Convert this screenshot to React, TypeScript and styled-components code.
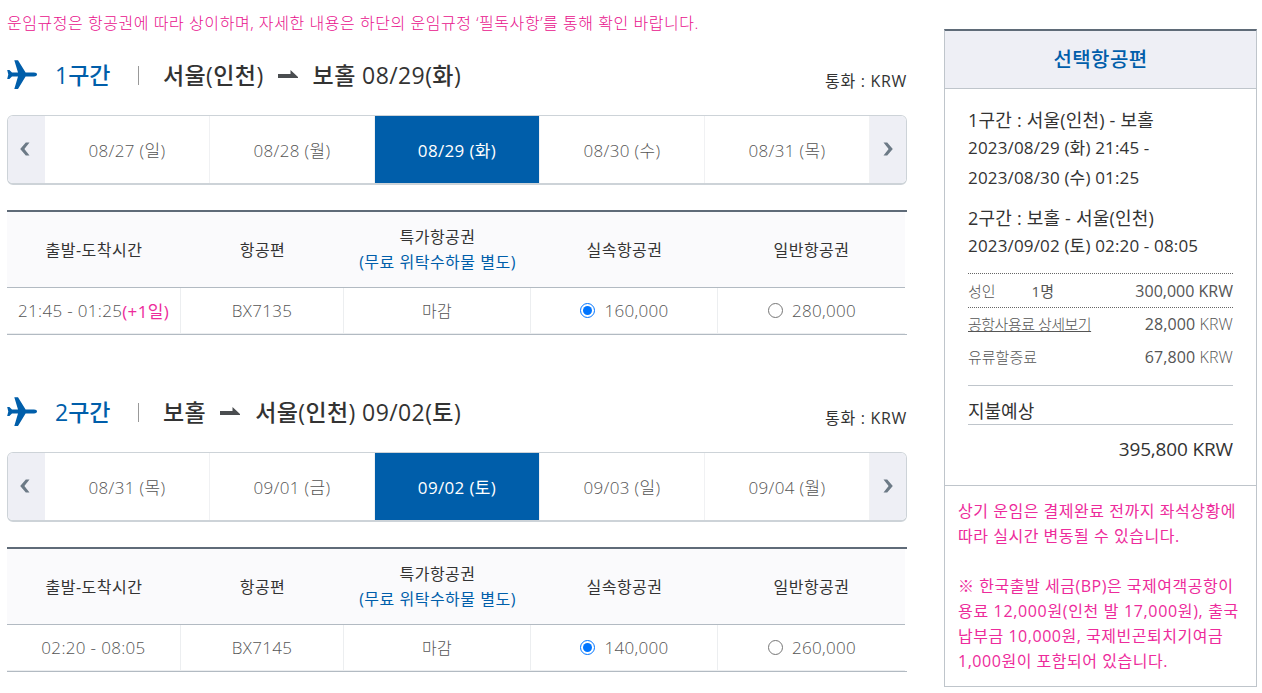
import React from 'react'
import styled, { createGlobalStyle } from 'styled-components'

const legs = [
  {
    no: '1구간',
    from: '서울(인천)',
    to: '보홀 08/29(화)',
    days: ['08/27 (일)', '08/28 (월)', '08/29 (화)', '08/30 (수)', '08/31 (목)'],
    time: '21:45 - 01:25',
    plus: '(+1일)',
    flight: 'BX7135',
    fares: ['160,000', '280,000'],
  },
  {
    no: '2구간',
    from: '보홀',
    to: '서울(인천) 09/02(토)',
    days: ['08/31 (목)', '09/01 (금)', '09/02 (토)', '09/03 (일)', '09/04 (월)'],
    time: '02:20 - 08:05',
    plus: '',
    flight: 'BX7145',
    fares: ['140,000', '260,000'],
  },
]

const notes = [
  '상기 운임은 결제완료 전까지 좌석상황에',
  '따라 실시간 변동될 수 있습니다.',
  '',
  '※ 한국출발 세금(BP)은 국제여객공항이',
  '용료 12,000원(인천 발 17,000원), 출국',
  '납부금 10,000원, 국제빈곤퇴치기여금',
  '1,000원이 포함되어 있습니다.',
]

const Plane = () => (
  <svg width="30" height="30" viewBox="0 0 30 30" fill="#005eaa">
    <path d="M7.3 0.3H11L18.6 12.6H27C29 12.6 30 13.4 30 14.5C30 15.6 29 16.4 27 16.4H18.6L11 28.9H7.3L11 16.4H5L2.4 19.1H0.2L1.3 14.5L0.2 9.9H2.4L5 12.6H11Z" />
  </svg>
)

const Arrow = () => (
  <svg width="20" height="8" viewBox="0 0 20 8" fill="#4a4d50">
    <path d="M0 4H12.5V0L20 7V8H0Z" />
  </svg>
)

const Chevron = ({ right = false }: { right?: boolean }) => (
  <svg width="10" height="14" viewBox="0 0 10 14" fill="#6c7a86">
    <path d={right ? 'M0.5 0.5H4.2L9.8 7L4.2 13.5H0.5L5.6 7Z' : 'M9.5 0.5H5.8L0.2 7L5.8 13.5H9.5L4.4 7Z'} />
  </svg>
)

const Leg = ({ leg }: { leg: (typeof legs)[0] }) => (
  <Section>
    <Heading>
      <Plane />
      <LegNo>{leg.no}</LegNo>
      <Bar />
      <Place>{leg.from}</Place>
      <Arrow />
      <Place>{leg.to}</Place>
      <Currency>통화 : KRW</Currency>
    </Heading>
    <Days>
      <Move><Chevron /></Move>
      {leg.days.map((day, i) => (
        <Day key={day} $active={i === 2}>{day}</Day>
      ))}
      <Move $right><Chevron right /></Move>
    </Days>
    <Table>
      <HeadRow>
        <Head>출발-도착시간</Head>
        <Head>항공편</Head>
        <Head>특가항공권<Blue>(무료 위탁수하물 별도)</Blue></Head>
        <Head>실속항공권</Head>
        <Head>일반항공권</Head>
      </HeadRow>
      <Row>
        <Cell>{leg.time}<Plus>{leg.plus}</Plus></Cell>
        <Cell>{leg.flight}</Cell>
        <Cell><SoldOut>마감</SoldOut></Cell>
        {leg.fares.map((fare, i) => (
          <Cell key={fare}><Radio $checked={i === 0} />{fare}</Cell>
        ))}
      </Row>
    </Table>
  </Section>
)

const App = () => {
  return (
    <Container>
      <GlobalStyle />
      <Main>
        <Notice>운임규정은 항공권에 따라 상이하며, 자세한 내용은 하단의 운임규정 ‘필독사항’를 통해 확인 바랍니다.</Notice>
        {legs.map((leg) => (
          <Leg key={leg.no} leg={leg} />
        ))}
      </Main>
      <Side>
        <SideTitle>선택항공편</SideTitle>
        <Summary>
          <Route>1구간 : 서울(인천) - 보홀</Route>
          <When>2023/08/29 (화) 21:45 -</When>
          <When $tall>2023/08/30 (수) 01:25</When>
          <Route $second>2구간 : 보홀 - 서울(인천)</Route>
          <When>2023/09/02 (토) 02:20 - 08:05</When>
          <Adult>
            <span>성인</span>
            <Count>1명</Count>
            <Amount>300,000 KRW</Amount>
          </Adult>
          <Charge><Detail>공항사용료 상세보기</Detail><Amount>28,000 <Unit>KRW</Unit></Amount></Charge>
          <Charge><span>유류할증료</span><Amount>67,800 <Unit>KRW</Unit></Amount></Charge>
          <TotalTitle>지불예상</TotalTitle>
          <Total>395,800 KRW</Total>
        </Summary>
        <Notes>
          {notes.map((line, i) => (
            <NoteLine key={i}>{line}</NoteLine>
          ))}
        </Notes>
      </Side>
    </Container>
  )
}

export default App

const GlobalStyle = createGlobalStyle`
* { box-sizing: border-box; }
body {
  margin: 0;
  background: #fff;
  font-family: "Open Sans", "Noto Sans CJK KR", sans-serif;
  overflow: hidden;
}
svg { display: block; flex: none; }
`
const Container = styled.div`
  display: flex;
  width: 1262px;
  height: 693px;
  padding-left: 7px;
  white-space: nowrap;
  overflow: hidden;
`
const Main = styled.div`
  width: 900px;
`
const Notice = styled.div`
  height: 50px;
  padding-top: 11px;
  line-height: 24px;
  font-size: 16px;
  font-weight: 300;
  letter-spacing: 0.55px;
  color: #e8108c;
`
const Section = styled.div`
  height: 337px;
`
const Heading = styled.div`
  display: flex;
  align-items: center;
  height: 50px;
`
const LegNo = styled.div`
  width: 57px;
  margin-left: 18px;
  padding-bottom: 3px;
  font-size: 23px;
  font-weight: 500;
  color: #005eaa;
`
const Bar = styled.div`
  width: 1px;
  height: 19px;
  margin: 0 24px 0 26px;
  background: #999;
`
const Place = styled.div`
  padding-bottom: 3px;
  font-size: 23px;
  font-weight: 500;
  letter-spacing: 0.4px;
  color: #333;
  & + svg { margin: 0 15px 2px 14px; }
`
const Currency = styled.div`
  margin-left: auto;
  padding-top: 10px;
  font-size: 16px;
  letter-spacing: 0.7px;
  color: #333;
`
const Days = styled.div`
  display: flex;
  height: 70px;
  margin-top: 15px;
  border: 1px solid #cdd3d8;
  border-bottom-width: 2px;
  border-radius: 6px;
  overflow: hidden;
`
const Move = styled.div<{ $right?: boolean }>`
  display: flex;
  align-items: center;
  justify-content: center;
  width: ${(p) => (p.$right ? '36px' : '37px')};
  padding: ${(p) => (p.$right ? '0 0 2px' : '0 3px 2px 0')};
  flex: none;
  background: #eeeff5;
`
const Day = styled.div<{ $active: boolean }>`
  flex: 1;
  border-right: 1px solid #f0f1f3;
  line-height: 69px;
  text-align: center;
  font-size: 17px;
  font-weight: ${(p) => (p.$active ? 400 : 300)};
  letter-spacing: 0.35px;
  color: ${(p) => (p.$active ? '#fff' : '#555')};
  background: ${(p) => (p.$active ? '#005eaa' : '#fff')};
`
const Table = styled.div`
  margin-top: 25px;
  border-top: 2px solid #5f6b78;
  border-bottom: 1px solid #b2bac2;
`
const HeadRow = styled.div`
  display: grid;
  grid-template-columns: 174px 163px 187px 187px 187px;
  align-items: center;
  width: 898px;
  height: 76px;
  background: #fafafc;
  border-bottom: 1px solid #b2bac2;
`
const Head = styled.div`
  padding-top: 1px;
  text-align: center;
  line-height: 25px;
  font-size: 16px;
  letter-spacing: 0.5px;
  color: #333;
`
const Blue = styled.div`
  color: #005eaa;
`
const Row = styled.div`
  display: grid;
  grid-template-columns: 174px 163px 187px 187px 187px;
  width: 898px;
  height: 46px;
  border-bottom: 1px solid #eceef0;
`
const Cell = styled.div`
  display: flex;
  align-items: center;
  justify-content: center;
  border-right: 1px solid #eceef0;
  font-size: 17px;
  font-weight: 300;
  letter-spacing: 0.33px;
  color: #555;
  &:last-child { border-right: 0; }
`
const SoldOut = styled.span`
  padding-bottom: 2px;
  font-size: 16px;
`
const Plus = styled.span`
  font-weight: 400;
  color: #ed2b9b;
`
const Radio = styled.span<{ $checked: boolean }>`
  width: 15px;
  height: 15px;
  margin: 0 9px 0 1px;
  border: ${(p) => (p.$checked ? '1.5px solid #0075ff' : '1.5px solid #767676')};
  border-radius: 50%;
  padding: 2px;
  background: ${(p) => (p.$checked ? '#0075ff' : '#fff')} content-box;
`
const Side = styled.div`
  width: 313px;
  height: 658px;
  margin: 29px 0 0 37px;
  border: 1px solid #bfc5cb;
  border-top: 2px solid #5f6b78;
`
const SideTitle = styled.div`
  height: 58px;
  border-bottom: 1px solid #bfc5cb;
  background: #eeeff5;
  line-height: 58px;
  text-align: center;
  font-size: 20px;
  font-weight: 500;
  letter-spacing: 0.4px;
  color: #005eaa;
`
const Summary = styled.div`
  height: 397px;
  padding: 16px 23px 0;
  border-bottom: 1px solid #bfc5cb;
  color: #333;
`
const Route = styled.div<{ $second?: boolean }>`
  margin-top: ${(p) => (p.$second ? '10px' : '0')};
  height: 30px;
  line-height: 30px;
  font-size: 18px;
  letter-spacing: 0.2px;
`
const When = styled.div<{ $tall?: boolean }>`
  height: ${(p) => (p.$tall ? '30px' : '28px')};
  line-height: ${(p) => (p.$tall ? '30px' : '26px')};
  font-size: 17px;
  letter-spacing: 0.16px;
`
const Adult = styled.div`
  display: flex;
  height: 35px;
  margin-top: 12px;
  border-top: 1px dotted #666;
  border-bottom: 1px dotted #666;
  line-height: 34px;
  font-size: 15px;
  font-weight: 300;
  color: #555;
`
const Count = styled.span`
  margin-left: 36px;
  font-weight: 400;
`
const Amount = styled.span`
  margin-left: auto;
  font-size: 16px;
  font-weight: 400;
`
const Unit = styled.span`
  font-weight: 300;
`
const Charge = styled.div`
  display: flex;
  height: 33px;
  line-height: 33px;
  font-size: 15px;
  font-weight: 300;
  color: #555;
  ${Amount} { letter-spacing: 0.1px; }
`
const Detail = styled.span`
  letter-spacing: -0.5px;
  text-decoration: underline;
`
const TotalTitle = styled.div`
  height: 40px;
  margin-top: 11px;
  border-top: 1px solid #bfc5cb;
  border-bottom: 1px solid #bfc5cb;
  line-height: 50px;
  font-size: 18px;
`
const Total = styled.div`
  line-height: 48px;
  text-align: right;
  font-size: 19px;
  letter-spacing: -0.15px;
`
const Notes = styled.div`
  padding: 12px 13px 0;
`
const NoteLine = styled.div`
  height: 25px;
  line-height: 26px;
  font-size: 16px;
  letter-spacing: 0.53px;
  color: #ed2b9b;
  &:nth-child(5) { letter-spacing: 0.66px; }
`
